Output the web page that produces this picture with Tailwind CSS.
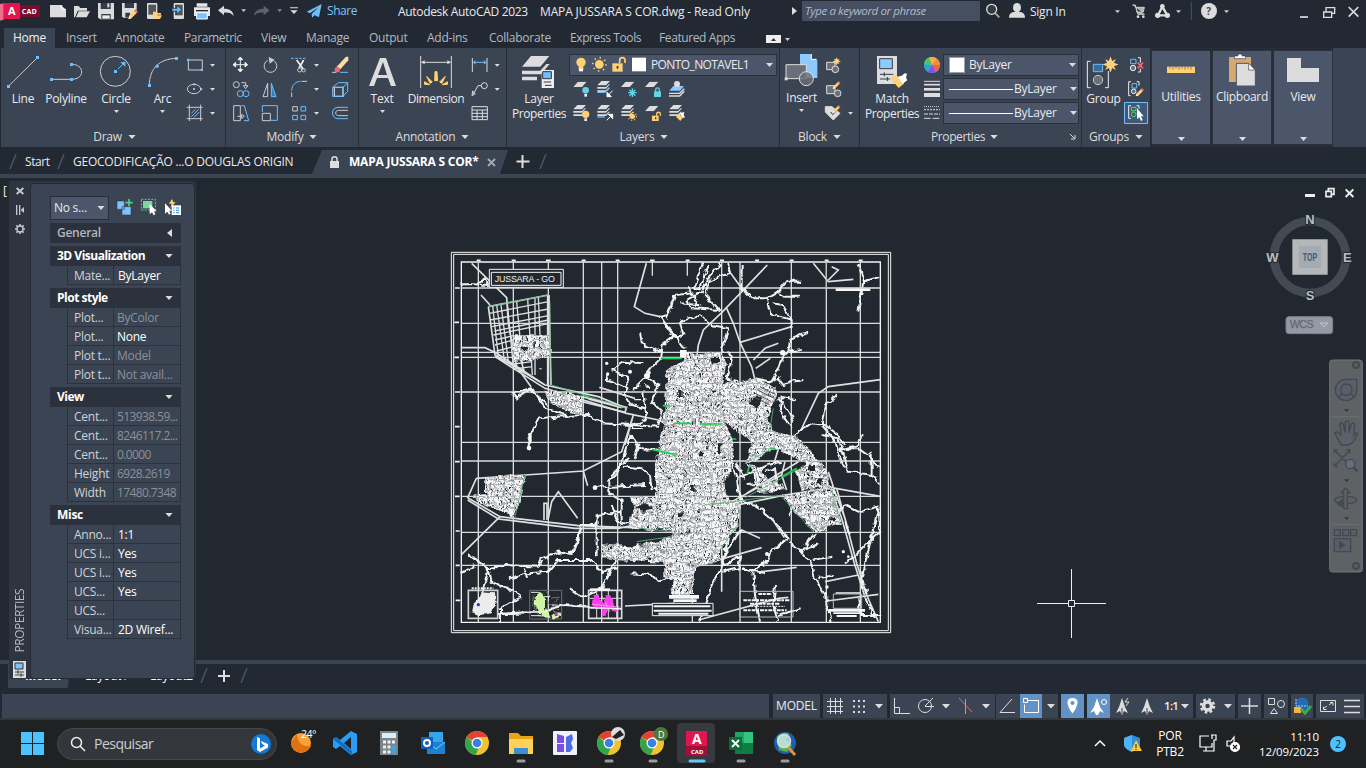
<!DOCTYPE html>
<html lang="en">
<head>
<meta charset="utf-8">
<title>Autodesk AutoCAD 2023</title>
<script src="https://cdn.jsdelivr.net/npm/@tailwindcss/browser@4"></script>
</head>
<body class="w-[1366px] h-[768px] overflow-hidden bg-[#222933] text-[#e8eaed] font-['Open_Sans','Noto_Sans',sans-serif] text-[12px] leading-none tracking-[-0.25px] whitespace-nowrap">
<svg class="hidden">
  <symbol id="caret" viewBox="0 0 9 5"><path d="M0 0h9L4.500 5z" fill="#dcdcdc"/></symbol>
  <symbol id="star" viewBox="-12 -12 24 24"><path d="M0-12 2.500-5 8-8 5-2.500 12 0 5 2.500 8 8 2.500 5 0 12-2.500 5-8 8-5 2.500-12 0-5-2.500-8-8-2.500-5z" fill="#ffd174"/></symbol>
  <symbol id="sheet" viewBox="0 0 40 16"><path d="M14 0h26L26 16H0z" fill="#dcdcdc"/></symbol>
  <symbol id="stack" viewBox="0 0 42 40"><path d="M14 0h26L28 13H2zM2 18h26l8-8h4L28 23H2zM2 28h26l8-8h4L28 33H2z" fill="#dcdcdc"/></symbol>
  <symbol id="pencil" viewBox="0 0 26 26"><path d="M1 25 3 17 18 2l6 6L9 23z" fill="#ffd174"/><path d="m16 4 4-4 6 6-4 4z" fill="#f4646c"/><path d="m1 25 2-8 6 6z" fill="#eee"/></symbol>
  <symbol id="scale" viewBox="0 0 16 18"><path d="M8 1 11 10 14 16 10 14 8.500 17.500h-1L6 14 2 16 5 10z" fill="#dcdcdc"/><path d="M8 11v6" stroke="#3b4453"/></symbol>
</svg>

<div class="flex flex-col w-full h-full">
<!-- title bar -->
<header class="flex items-start h-[28px] bg-[#222933] [&>*]:shrink-0">
  <svg width="48" height="24" viewBox="0 0 144 72"><path d="M0 12 16 9v48L0 62z" fill="#ee6f8c"/><path d="M10 9h50v48H10z" fill="#e3154f"/><path d="M60 15h60v36H60z" fill="#7a0c2f"/><text x="24" y="44" font-size="33" font-weight="700" fill="#fff" letter-spacing="0">A</text><text x="65" y="41" font-size="21" font-weight="700" fill="#fff" letter-spacing="1">CAD</text></svg>
  <svg width="24" height="24" viewBox="144 0 72 72"><path d="M150 15h33l15 15v22h-48z" fill="#dcdcdc"/><path d="M185 15v13h13" fill="none" stroke="#fff" stroke-width="3"/></svg>
  <svg width="24" height="24" viewBox="216 0 72 72"><path d="M222 18h14l5 6h20v8h-28l-8 20h-3z" fill="#dcdcdc"/><path d="M236 34h34l-10 18h-32z" fill="#dcdcdc"/></svg>
  <svg width="24" height="24" viewBox="288 0 72 72"><path d="M294 9h48v49h-42l-6-6z" fill="#dcdcdc"/><path d="M302 9h30v18h-30zM304 42h28v16h-28z" fill="#333b48"/><path d="M307 46h22v10h-22z" fill="#eee"/><path d="M322 10h6v12h-6z" fill="#ddd"/></svg>
  <svg width="24" height="24" viewBox="360 0 72 72"><path d="M366 9h44v20l-28 24h-12l-4-4z" fill="#dcdcdc"/><path d="M374 9h28v15h-28zM376 38h14v14h-14z" fill="#333b48"/><use href="#pencil" x="384" y="28" width="30" height="30"/></svg>
  <svg width="24" height="24" viewBox="432 0 72 72"><rect x="441" y="9" width="31" height="48" rx="3" fill="#dcdcdc"/><path d="M445 14h23v30h-23z" fill="#555"/><path d="M459 35h10l3 4h11v5h-14l-7 13h-3zM469 46h17l-6 11h-17z" fill="#ffd174"/></svg>
  <svg width="22" height="24" viewBox="504 0 66 72"><rect x="521" y="9" width="31" height="48" rx="3" fill="#dcdcdc"/><path d="M525 14h23v32h-23z" fill="#555"/><path d="M516 25h15v-10l14 14-14 14v-9h-15z" fill="#62b8f5" stroke="#222933" stroke-width="2"/></svg>
  <svg width="24" height="24" viewBox="570 0 72 72"><path d="M590 10h32v10h-32zM582 22h48v26h-48z" fill="#e6e6e6"/><path d="M588 30h36v4h-36z" fill="#222933"/><path d="M590 38h32v19h-32z" fill="#7cc4ff" stroke="#fff" stroke-width="3"/></svg>
  <svg width="22" height="24" viewBox="642 0 66 72"><path d="M654 31l18-14v9c18 0 28 8 29 22-6-8-14-11-29-10v8z" fill="#dcdcdc"/></svg>
  <svg width="14" height="24" viewBox="708 0 42 72"><path d="M724 28h14l-7 8z" fill="#ccc"/></svg>
  <svg width="23" height="24" viewBox="750 0 69 72"><path d="M809 31l-18-14v9c-18 0-28 8-29 22 6-8 14-11 29-10v8z" fill="#5b626c"/></svg>
  <svg width="11" height="24" viewBox="819 0 33 72"><path d="M832 28h14l-7 8z" fill="#8a8f96"/></svg>
  <svg width="18" height="24" viewBox="852 0 54 72"><path d="M870 22h24v3h-24zM871 31h22l-11 11z" fill="#dcdcdc"/></svg>
  <svg width="24" height="24" viewBox="906 0 72 72"><path d="M920 35 965 12 957 52 944 46 936 53 935 42 955 22 930 40z" fill="#6cbdf5"/></svg>
  <span class="w-[72px] pl-px pt-[5px] tracking-[-0.45px] text-[#7fc4f2]">Share</span>
  <span class="w-[142px] pt-[6px] tracking-[-0.32px]">Autodesk AutoCAD 2023</span>
  <span class="w-[248px] pt-[6px] tracking-[-0.14px]">MAPA JUSSARA S COR.dwg - Read Only</span>
  <svg width="14" height="24" viewBox="0 0 14 24"><path d="M4 7v8l5-4z" fill="#ddd"/></svg>
  <div class="w-[178px] h-[20px] mt-px bg-[#454f61] pl-[3px] pt-[4px] italic text-[#b4bac4] text-[11.5px] tracking-[-0.4px]">Type a keyword or phrase</div>
  <svg width="26" height="24" viewBox="630 0 78 72"><path d="m674 38 14 14" stroke="#c79a6b" stroke-width="6"/><circle cx="665" cy="28" r="15" fill="#333b48" stroke="#dcdcdc" stroke-width="4"/></svg>
  <svg width="23" height="24" viewBox="708 0 69 72"><ellipse cx="741" cy="23" rx="12" ry="14" fill="#ddd"/><path d="M717 53c0-12 8-17 17-17h14c9 0 17 5 17 17z" fill="#ddd"/></svg>
  <span class="w-[81px] pt-[6px] pl-[1px]">Sign In</span>
  <svg width="22" height="24" viewBox="150 0 66 72"><path d="M165 31h15l-7.500 8z" fill="#ccc"/></svg>
  <svg width="22" height="24" viewBox="216 0 66 72"><path d="M217 15h9l8 28h20M226 22h27l-3 14h-21" fill="#aeb0b3" stroke="#ccc" stroke-width="3"/><circle cx="234" cy="50" r="4" fill="#ddd"/><circle cx="250" cy="50" r="4" fill="#ddd"/></svg>
  <svg width="34" height="24" viewBox="282 0 102 72"><path d="m307 20-13 26h28z" fill="none" stroke="#ddd" stroke-width="7"/><circle cx="307" cy="19" r="7" fill="#ddd"/><circle cx="293" cy="46" r="8" fill="#ddd"/><circle cx="322" cy="46" r="8" fill="#ddd"/><path d="M348 31h15l-7.500 8z" fill="#ccc"/></svg>
  <svg width="52" height="24" viewBox="384 0 156 72"><path d="M394 6v54" stroke="#4a5362" stroke-width="3"/><circle cx="447" cy="33" r="24" fill="#dcdcdc"/><text x="439" y="44" font-size="30" font-weight="700" fill="#444b58">?</text><path d="M492 31h15l-7.500 8z" fill="#ccc"/></svg>
  <svg width="126" height="24" viewBox="540 0 378 72" fill="none" stroke="#ddd"><path d="M720 51h24" stroke-width="5"/><path d="M791 36h24v16h-24zM798 34v-11h26v17h-8" stroke-width="4"/><path d="m866 21 29 29M895 21l-29 29" stroke-width="5"/></svg>
</header>

<!-- ribbon tabs -->
<nav class="flex h-[20px] items-stretch pl-[4px] text-[#b4b9c1]">
  <span class="w-[51px] h-[20px] bg-[#3b4453] text-[#f0f0f0] pl-[9px] pt-[4px] mr-[11px]">Home</span>
  <span class="w-[49px] pt-[4px]">Insert</span><span class="w-[69px] pt-[4px]">Annotate</span><span class="w-[77px] pt-[4px] tracking-[-0.35px]">Parametric</span><span class="w-[45px] pt-[4px]">View</span><span class="w-[63px] pt-[4px]">Manage</span><span class="w-[58px] pt-[4px]">Output</span><span class="w-[62px] pt-[4px]">Add-ins</span><span class="w-[81px] pt-[4px]">Collaborate</span><span class="w-[89px] pt-[4px] tracking-[-0.4px]">Express Tools</span><span class="w-[107px] pt-[4px] tracking-[-0.4px]">Featured Apps</span>
  <svg width="30" height="20" viewBox="0 0 30 20"><path d="M0 7h15v8H0z" fill="#eee"/><path d="m5 13 2.500-3 2.500 3z" fill="#333"/><path d="M19 10h5l-2.500 3z" fill="#ccc"/></svg>
</nav>

<!-- ribbon -->
<section class="flex h-[99px] ml-px bg-[#3b4453]">
  <!-- Draw -->
  <div class="w-[224px] flex flex-col">
    <div class="flex h-[79px] pt-[2px]">
      <div class="w-[41px] flex flex-col items-center"><svg width="41" height="40" viewBox="3 150 123 120"><path d="M25 259 112 173" stroke="#ccc" stroke-width="3"/><path d="M21 255h9v9h-9zM108 168h9v9h-9z" fill="#6cc0ff"/></svg><span class="pt-[3px] pl-[3px]">Line</span></div>
      <div class="w-[48px] flex flex-col items-center"><svg width="48" height="40" viewBox="126 150 144 120"><path d="M154 238h60c22 0 31-12 31-22 0-13-11-23-31-23" fill="none" stroke="#ccc" stroke-width="3"/><path d="M150 234h9v9h-9zM210 234h9v9h-9zM210 189h9v9h-9z" fill="#6cc0ff"/></svg><span class="pt-[3px]">Polyline</span></div>
      <div class="w-[52px] flex flex-col items-center"><svg width="52" height="40" viewBox="270 150 156 120"><circle cx="346" cy="214" r="45" fill="none" stroke="#ccc" stroke-width="3"/><path d="M342 210h9v9h-9zM376 185v15l-15-13z" fill="#6cc0ff"/><path d="m354 207 14-14" stroke="#6cc0ff" stroke-width="3"/></svg><span class="pt-[3px]">Circle</span><svg class="w-[5px] h-[3px] mt-[5px]"><use href="#caret"/></svg></div>
      <div class="w-[41px] flex flex-col items-center"><svg width="41" height="40" viewBox="426 150 123 120"><path d="M448 256c0-50 30-80 82-81" fill="none" stroke="#ccc" stroke-width="3"/><path d="M444 252h9v9h-9zM525 171h9v9h-9zM467 194h9v9h-9z" fill="#6cc0ff"/></svg><span class="pt-[3px]">Arc</span><svg class="w-[5px] h-[3px] mt-[5px]"><use href="#caret"/></svg></div>
      <svg width="42" height="72" class="mt-[3px]" viewBox="549 159 126 216" fill="none" stroke="#ccc" stroke-width="3"><path d="M565 180h42v30h-42z"/><path d="M561 176h7v7h-7zM602 206h7v7h-7zM580 250h6v6h-6zM600 264h7v6h-7zM579 264h6v6h-6z" fill="#6cc0ff" stroke="none"/><ellipse cx="582" cy="267" rx="20" ry="14"/><path d="M560 322h48M560 356h48M568 314v49M602 314v49"/><path d="m574 340 12-12M574 350l22-22M582 352l16-16" stroke="#6cc0ff"/><path d="M630 192h15l-7.500 8zM630 264h15l-7.500 8zM630 336h15l-7.500 8z" fill="#ddd" stroke="none"/></svg>
    </div>
    <div class="flex items-center justify-center gap-[6px] h-[20px] pl-[3px] text-[#ddd]">Draw <svg class="w-[8px] h-[4px]"><use href="#caret"/></svg></div>
  </div>
  <!-- Modify -->
  <div class="w-[133px] flex flex-col border-l border-[#262d38]">
    <svg width="132" height="72" class="mt-[5px] mb-[2px]" viewBox="678 159 396 216" fill="none" stroke="#ccc" stroke-width="3">
      <path d="M700 194h42M721 172v43M714 179l7-8 7 8zM714 208l7 8 7-8zM707 187l-8 7 8 7zM735 187l8 7-8 7z" stroke="#eee" fill="#eee"/>
      <path d="M803 181a19 19 0 1 0 20 2"/><path d="M806 171l18 8-15 12z" fill="#ccc" stroke="none"/>
      <path d="M873 175h46" stroke="#6cc0ff" stroke-dasharray="8 4"/><path d="m890 180 20 28M911 180l-14 24" stroke="#eee" stroke-width="5"/><circle cx="899" cy="210" r="6"/><circle cx="911" cy="211" r="5"/>
      <path d="m1010 200 28-30h7v11l-24 27z" fill="#ffdca0" stroke="none"/><circle cx="1012" cy="209" r="8" fill="#f4646c" stroke="none"/><path d="M996 217h13"/><path d="M1020 217h24" stroke="#6cc0ff"/>
      <circle cx="709" cy="254" r="9"/><path d="M724 248h13v10M730 257h14l-7 9z"/><g stroke="#6cc0ff"><circle cx="721" cy="281" r="9"/><circle cx="738" cy="281" r="9"/></g>
      <path d="M803 250v40h-14z"/><path d="M814 250v40h14z" fill="#2f82bd" stroke="#6cc0ff"/>
      <path d="M875 291v-14M904 244h17"/><path d="M875 272c0-16 11-27 26-28" stroke="#6cc0ff"/>
      <path d="M1003 262h26v27h-26z" stroke-width="4"/><path d="M998 262v27h31l14-15v-26h-28zM998 262h31v27M1029 262l14-14" stroke="#6cc0ff"/>
      <path d="M701 317h20v45h-20zM712 349h14M725 343l8 6-8 6z"/><path d="M724 317h9l13 45h-14" stroke="#6cc0ff"/>
      <path d="M787 336v-19h45v44h-19" stroke="#6cc0ff"/><path d="M787 340h24v22h-24z"/>
      <path d="M878 320h14v13h-14z"/><path d="M903 320h14v13h-14zM878 346h14v13h-14zM903 346h14v13h-14z" stroke="#6cc0ff"/>
      <path d="M1044 322h-30c-22 0-22 34 0 34h30" stroke="#6cc0ff"/><path d="M1044 331h-28c-12 0-12 16 0 16h28"/>
      <path d="M942 192h15l-7.500 8zM942 264h15l-7.500 8zM942 336h15l-7.500 8z" fill="#ddd" stroke="none"/>
    </svg>
    <div class="flex items-center justify-center gap-[6px] h-[20px] text-[#ddd]">Modify <svg class="w-[8px] h-[4px]"><use href="#caret"/></svg></div>
  </div>
  <!-- Annotation -->
  <div class="w-[148px] flex flex-col border-l border-[#262d38]">
    <div class="flex h-[79px] pt-[2px]">
      <div class="w-[46px] flex flex-col items-center"><svg width="46" height="40" viewBox="0 0 46 40"><path d="M21 8h6l10 28h-5l-3-8H18l-3 8h-5zm3 4-5 13h9z" fill="#ddd" fill-rule="evenodd"/></svg><span class="pt-[3px]">Text</span><svg class="w-[5px] h-[3px] mt-[5px]"><use href="#caret"/></svg></div>
      <div class="w-[62px] flex flex-col items-center"><svg width="62" height="40" viewBox="132 150 186 120"><path d="M179 168v96M271 168v96M182 187h86" stroke="#ddd" stroke-width="3"/><path d="m180 187 11-6v12zM270 187l-11-6v12z" fill="#ddd"/><path d="m190 253 16 1-15-9zM197 229l17 17-7 4zM222 215h6l2 27h-9zM253 229l-17 17 7 4zM260 253l-16 1 15-9z" fill="#ffd174" stroke="#ffd174" stroke-width="3"/></svg><span class="pt-[3px] tracking-[-0.4px]">Dimension</span></div>
      <svg width="36" height="72" class="mt-[3px]" viewBox="322 159 108 216" fill="none" stroke="#ddd" stroke-width="3"><path d="M338 174v42M382 174v42"/><path d="M341 187h38M348 182l-7 5 7 5M372 182l7 5-7 5" stroke="#6cc0ff"/><circle cx="374" cy="257" r="9"/><path d="M365 257h-10l-14 25M337 287l2-14 8 8z"/><path d="M337 320h46v39h-46zM337 330h46M337 340h46M337 350h46M352 330v29M368 330v29"/><path d="M405 192h15l-7.500 8zM405 264h15l-7.500 8z" fill="#ddd" stroke="none"/></svg>
    </div>
    <div class="flex items-center justify-center gap-[6px] h-[20px] text-[#ddd]">Annotation <svg class="w-[8px] h-[4px]"><use href="#caret"/></svg></div>
  </div>
  <!-- Layers -->
  <div class="w-[273px] flex flex-col border-l border-[#262d38]">
    <div class="flex h-[79px] pt-[2px]">
      <div class="w-[62px] flex flex-col items-center"><svg width="62" height="40" viewBox="441 150 186 120"><path d="M513 168h55l-27 32h-55zM486 212h55l18-20h10l-26 31h-57zM486 230h45v11h-45z" fill="#ddd"/><path d="M545 210h37v54h-37z" fill="#eee"/><path d="M548 215h26v21h-26z" fill="#6cc0ff" stroke="#333" stroke-width="3"/><path d="M551 246h22M555 256h20" stroke="#333" stroke-width="3"/></svg><span class="pt-[3px] pl-[2px]">Layer</span><span class="pt-[3px] pl-[2px] tracking-[-0.4px]">Properties</span></div>
      <div class="flex flex-col">
        <div class="mt-[4px] w-[208px] h-[22px] bg-[#4b566a] border border-[#2a313d] flex items-center">
          <svg width="80" height="20" viewBox="630 166 240 60"><circle cx="663" cy="188" r="14" fill="#ffd174"/><path d="M656 200h14v10h-14z" fill="#ffd174"/><path d="M657 207h12v8h-12z" fill="#fff"/><circle cx="718" cy="194" r="13" fill="#ffd174"/><circle cx="718" cy="194" r="20" fill="none" stroke="#ffd174" stroke-width="5" stroke-dasharray="4 11.700"/><path d="M757 191h31v25h-31z" fill="#ffd174"/><path d="M779 191v-9c0-11 16-11 16 0v8" fill="none" stroke="#ffd174" stroke-width="5"/><path d="M770 199h5v8h-5z" fill="#333"/><path d="M816 174h42v41h-42z" fill="#fff"/></svg>
          <span class="pl-[1px] w-[116px] tracking-[-0.6px]">PONTO_NOTAVEL1</span><svg class="w-[7px] h-[4px]"><use href="#caret"/></svg>
        </div>
        <svg width="130" height="48" viewBox="627 228 390 144"><use href="#sheet" x="640" y="245" width="40" height="16"/><circle cx="677" cy="271" r="10" fill="#63d3e6"/><path d="M673 282h8v8h-8z" fill="#eee"/>
          <use href="#stack" x="710" y="243" width="42" height="40"/><path d="M712 277h22l14-14" stroke="#6cc0ff" stroke-width="4" fill="none"/><path d="m758 272-14 14M741 277v13h13z" stroke="#fff" stroke-width="3" fill="#fff"/>
          <use href="#sheet" x="783" y="245" width="40" height="16"/><path d="M817 265v26M804 278h26M808 269l18 18M826 269l-18 18" stroke="#63d3e6" stroke-width="4"/>
          <use href="#sheet" x="855" y="245" width="40" height="16"/><path d="M882 274h21v17h-21z" fill="#63d3e6"/><path d="M887 275v-6c0-7 11-7 11 0v6" fill="none" stroke="#63d3e6" stroke-width="4"/>
          <path d="M940 258h32l-12 14h-32z" fill="#8ccaff"/><circle cx="951" cy="252" r="9" fill="#ddd"/><path d="M927 280h32l14-14M927 288h32l14-14" fill="none" stroke="#ddd" stroke-width="4"/>
          <use href="#stack" x="638" y="315" width="42" height="40"/><circle cx="677" cy="343" r="11" fill="#ffd174"/><path d="M673 355h8v8h-8z" fill="#eee"/>
          <use href="#stack" x="710" y="315" width="42" height="40"/><path d="M712 351h22" stroke="#6cc0ff" stroke-width="4"/><path d="m740 361 14-14M745 343h13v13z" stroke="#fff" stroke-width="3" fill="#fff"/>
          <use href="#stack" x="782" y="315" width="42" height="40"/><circle cx="817" cy="349" r="8" fill="#ffd174"/><circle cx="817" cy="349" r="12" fill="none" stroke="#ffd174" stroke-width="4" stroke-dasharray="3 6.400"/>
          <use href="#sheet" x="855" y="318" width="40" height="16"/><path d="M876 347h20v16h-20z" fill="#ffd174"/><path d="M890 347v-5c0-7 11-7 11 0v5" fill="none" stroke="#ffd174" stroke-width="4"/><path d="M885 352h4v6h-4z" fill="#333"/>
          <use href="#stack" x="926" y="315" width="42" height="40"/><path d="m948 350 10-9 10 12-7 10z" fill="#ffd174"/><path d="m959 340 14-4-2 9 4 7-7 2z" fill="#fff"/></svg>
      </div>
    </div>
    <div class="flex items-center justify-center gap-[6px] h-[20px] pl-[2px] text-[#ddd]">Layers <svg class="w-[8px] h-[4px]"><use href="#caret"/></svg></div>
  </div>
  <!-- Block -->
  <div class="w-[80px] flex flex-col border-l border-[#262d38]">
    <div class="flex h-[79px] pt-[2px]">
      <div class="w-[43px] flex flex-col items-center"><svg width="43" height="39" viewBox="30 150 129 117"><path d="M90 162h32l20 20v52H90z" fill="#8ccaff"/><path d="M124 162v16h16" fill="#3b4453" stroke="#fff" stroke-width="3"/><path d="M48 194h61v42H48z" fill="#6a7078" stroke="#ddd" stroke-width="3"/><circle cx="109" cy="236" r="21" fill="#6a7078" fill-opacity=".8" stroke="#ddd" stroke-width="3"/><path d="M44 232h9v9h-9z" fill="#ddd"/></svg><span class="pt-[3px]">Insert</span><svg class="w-[5px] h-[3px] mt-[5px]"><use href="#caret"/></svg></div>
      <svg width="36" height="72" class="mt-[3px]" viewBox="159 159 108 216" fill="#6a7078" stroke="#ddd" stroke-width="3"><path d="M170 187h25v22h-25z"/><circle cx="196" cy="208" r="10"/><use href="#star" x="187" y="171" width="26" height="26" stroke="none"/><path d="M170 257h25v24h-25z"/><circle cx="203" cy="280" r="10"/><use href="#pencil" x="187" y="243" width="25" height="25" stroke="none"/><path d="M166 320h20l24 20-20 20-24-24z" fill="#ddd"/><path d="m182 336 6 8 14-14" stroke="#333" fill="none"/><use href="#pencil" x="187" y="315" width="25" height="25" stroke="none"/><path d="M234 336h15l-7.500 8z" fill="#ddd" stroke="none"/></svg>
    </div>
    <div class="flex items-center justify-center gap-[6px] h-[20px] text-[#ddd]">Block <svg class="w-[8px] h-[4px]"><use href="#caret"/></svg></div>
  </div>
  <!-- Properties -->
  <div class="w-[222px] flex flex-col border-l border-[#262d38]">
    <div class="flex h-[79px] pt-[2px]">
      <div class="w-[62px] flex flex-col items-center"><svg width="62" height="40" viewBox="270 150 186 120"><path d="M321 168h60v84h-60z" fill="#ddd"/><path d="M329 176h38v30h-38z" fill="#8ccaff" stroke="#333b48" stroke-width="3"/><path d="M330 223h40M330 237h30M343 217v12M352 231v12" stroke="#333b48" stroke-width="3"/><path d="m361 235 18-10 23 26-16 13z" fill="#ffd174"/><path d="m383 230 12-3 9-7 7 1-3 12 4 8-14 10z" fill="#fff"/></svg><span class="pt-[3px] pl-[2px]">Match</span><span class="pt-[3px] pl-[2px] tracking-[-0.4px]">Properties</span></div>
      <svg width="20" height="72" class="mt-[3px]" viewBox="456 159 60 216" fill="none"><g stroke-width="24"><circle cx="486" cy="195" r="12" stroke="#49b7d8"/><circle cx="486" cy="195" r="12" stroke="#f0604d" stroke-dasharray="12.600 100"/><circle cx="486" cy="195" r="12" stroke="#8a4df0" stroke-dasharray="0 12.600 12.600 100"/><circle cx="486" cy="195" r="12" stroke="#25a6d0" stroke-dasharray="0 25.200 12.600 100"/><circle cx="486" cy="195" r="12" stroke="#4cc36b" stroke-dasharray="0 37.800 12.600 100"/><circle cx="486" cy="195" r="12" stroke="#f7b23b" stroke-dasharray="0 50.400 12.600 100"/><circle cx="486" cy="195" r="12" stroke="#f58a3d" stroke-dasharray="0 63 13 100"/></g><path d="M462 244h48" stroke="#ddd" stroke-width="3"/><path d="M462 254h48" stroke="#ddd" stroke-width="5"/><path d="M462 268h48" stroke="#ddd" stroke-width="8"/><path d="M462 285h48" stroke="#ddd" stroke-width="12"/><g stroke="#ddd" stroke-width="3"><path d="M462 320h48" stroke-dasharray="3 3"/><path d="M462 329h48" stroke-dasharray="6 3"/><path d="M462 342h48" stroke-dasharray="12 3"/><path d="M462 355h48" stroke-dasharray="20 6"/></g></svg>
      <div class="flex flex-col gap-[2px] mt-[4px] ml-px">
        <div class="w-[136px] h-[22px] bg-[#4b566a] border border-[#2a313d] flex items-center"><span class="w-[16px] h-[16px] bg-white border border-gray-400 ml-[5px] mr-[4px]"></span><span class="w-[100px]">ByLayer</span><svg class="w-[7px] h-[4px] mr-[2px] shrink-0"><use href="#caret"/></svg></div>
        <div class="w-[136px] h-[22px] bg-[#4b566a] border border-[#2a313d] flex items-center"><span class="w-[64px] h-px bg-white ml-[5px] mr-[1px]"></span><span class="w-[56px]">ByLayer</span><svg class="w-[7px] h-[4px] shrink-0"><use href="#caret"/></svg></div>
        <div class="w-[136px] h-[22px] bg-[#4b566a] border border-[#2a313d] flex items-center"><span class="w-[64px] h-px bg-white ml-[5px] mr-[1px]"></span><span class="w-[56px]">ByLayer</span><svg class="w-[7px] h-[4px] shrink-0"><use href="#caret"/></svg></div>
      </div>
    </div>
    <div class="flex items-center h-[20px] text-[#ddd] pl-[71px]"><span class="w-[59px] tracking-[-0.4px]">Properties</span><svg class="w-[8px] h-[4px] mr-[72px]"><use href="#caret"/></svg><svg width="6" height="6" viewBox="0 0 6 6"><path d="M0 0l4 4M5 1v4H1" stroke="#ddd" fill="none"/></svg></div>
  </div>
  <!-- Groups -->
  <div class="w-[69px] flex flex-col border-l border-[#262d38]">
    <div class="flex h-[79px] pt-[2px]">
      <div class="w-[43px] flex flex-col items-center"><svg width="43" height="40" viewBox="66 150 129 120" fill="none" stroke="#eee" stroke-width="3"><path d="M92 184H82v79h10M135 263h10v-50"/><path d="M100 193h28v22h-28z" fill="#3f6b93" stroke="#6cc0ff"/><circle cx="114" cy="240" r="14" fill="#6a7078" stroke="#ccc"/><use href="#star" x="127" y="169" width="49" height="49" stroke="none"/></svg><span class="pt-[3px]">Group</span></div>
      <div class="flex flex-col mt-[3px] -ml-px"><svg width="24" height="48" viewBox="192 159 72 144" fill="none" stroke="#eee" stroke-width="3"><path d="M212 178h16v13h-16zM216 251h14v13h-14z" stroke="#6cc0ff"/><circle cx="219" cy="204" r="8" fill="#6a7078"/><circle cx="221" cy="274" r="7" fill="#6a7078"/><path d="M234 173h7v15M234 216h7v-10M213 245h-7v42h6M230 245h7v12"/><path d="m233 188 16 17M249 188l-16 17" stroke="#f4646c" stroke-width="5"/><use href="#pencil" x="226" y="264" width="26" height="26" stroke="none"/></svg>
      <svg class="bg-[#3f5a78] mt-px" width="24" height="22" viewBox="192 306 72 66" fill="none" stroke="#eee" stroke-width="3"><path d="M193.500 307.500h69v63h-69z" stroke="#6cc0ff"/><path d="M213 317h-7v38h7M230 317h7v9"/><path d="M214 322h14v10h-14z" stroke="#5fd07a"/><circle cx="221" cy="343" r="7" stroke="#5fd07a"/><path d="M231 325v33l7-6 5 11 5-3-5-11h8z" fill="#fff" stroke="none"/></svg></div>
    </div>
    <div class="flex items-center justify-center gap-[6px] h-[20px] text-[#ddd]">Groups <svg class="w-[8px] h-[4px]"><use href="#caret"/></svg></div>
  </div>
  <div class="flex gap-px pt-[2px] pb-[2px] pl-[1px] bg-[#262d38] w-[183px]">
    <div class="w-[60px] bg-[#4b566a] border border-[#2a313d] flex flex-col items-center"><svg width="58" height="38" viewBox="276 153 174 114"><path d="M321 200h84v19h-84z" fill="#ffd174"/><path d="M330 200v6M339 200v9M348 200v6M357 200v9M366 200v6M375 200v9M384 200v6M393 200v9" stroke="#5a5040" stroke-width="2"/></svg><span class="pt-[2px]">Utilities</span><svg class="w-[7px] h-[4px] mt-[34px]"><use href="#caret"/></svg></div>
    <div class="w-[60px] bg-[#4b566a] border border-[#2a313d] flex flex-col items-center"><svg width="58" height="38" viewBox="459 153 174 114"><path d="M507 171h66v75h-66z" fill="#d8a872"/><path d="M523 176v-8h10c2-8 12-8 14 0h10v8z" fill="#fff" stroke="#333b48" stroke-width="2"/><path d="M529 190h36l21 21v47h-57z" fill="#ddd" stroke="#4b566a" stroke-width="3"/><path d="M566 190v20h20z" fill="#fff" stroke="#333b48" stroke-width="2"/></svg><span class="pt-[2px]">Clipboard</span><svg class="w-[7px] h-[4px] mt-[34px]"><use href="#caret"/></svg></div>
    <div class="w-[60px] bg-[#4b566a] border border-[#2a313d] flex flex-col items-center"><svg width="58" height="38" viewBox="642 153 174 114"><path d="M681 174h42v30h54v42h-96z" fill="#dcdcdc"/></svg><span class="pt-[2px]">View</span><svg class="w-[7px] h-[4px] mt-[34px]"><use href="#caret"/></svg></div>
  </div>
</section>

<!-- file tabs -->
<div class="flex items-center h-[27px] pt-[2px] bg-[#222933] [&>*]:shrink-0">
  <svg width="25" height="23" viewBox="0 0 25 23"><path d="M10 19 16 4" stroke="#4b5462" stroke-width="1.500"/></svg><span class="w-[25px] tracking-[-0.4px]">Start</span>
  <svg width="23" height="23" viewBox="0 0 23 23"><path d="m8 19 6-15" stroke="#4b5462" stroke-width="1.500"/></svg><span class="w-[239px] tracking-[-0.23px]">GEOCODIFICAÇÃO ...O DOUGLAS ORIGIN</span>
  <div class="w-[196px] h-[24px] mt-[1px] bg-[#3b4453] [clip-path:polygon(10px_0,196px_0,188px_100%,0_100%)] flex items-center pl-[18px] [&>*]:shrink-0"><svg width="10" height="12" viewBox="0 0 10 12"><path d="M0 5h9v7H0z" fill="#ddd"/><path d="M2 6V3c0-3 5-3 5 0v3" fill="none" stroke="#ddd" stroke-width="1.500"/></svg><span class="font-bold text-white w-[147px] pl-[9px] tracking-[-0.22px]">MAPA JUSSARA S COR*</span><svg width="9" height="9" viewBox="0 0 9 9"><path d="m1 1 7 7M8 1 1 8" stroke="#a5abb5" stroke-width="1.800"/></svg></div>
  <svg width="50" height="23" viewBox="508 150 50 23"><path d="M516.500 161.500h13M522.500 155v13" stroke="#ddd" stroke-width="2"/><path d="m540 169 6-15" stroke="#4b5462" stroke-width="1.500"/></svg>
</div>
<div class="h-[4px] bg-[#3b4453]"></div>

<!-- drawing area -->
<main class="relative h-[482px] bg-[#212830]">
  <span class="absolute left-[3px] top-[7px]">[</span>
  <svg class="absolute left-[445px] top-[67px]" width="455" height="393" viewBox="0 0 1365 1179" fill="none" stroke="#f4f4f4" stroke-width="3">
    <defs>
      <filter id="wiggle" x="-5%" y="-5%" width="110%" height="110%" color-interpolation-filters="sRGB"><feTurbulence type="fractalNoise" baseFrequency=".05" numOctaves="2" seed="4"/><feDisplacementMap in="SourceGraphic" scale="18" xChannelSelector="R" yChannelSelector="G"/></filter>
      <filter id="rough" x="-5%" y="-5%" width="110%" height="110%" color-interpolation-filters="sRGB"><feTurbulence type="fractalNoise" baseFrequency=".03" numOctaves="3" seed="9"/><feDisplacementMap in="SourceGraphic" scale="26" xChannelSelector="R" yChannelSelector="G"/></filter>
      <clipPath id="town"><path d="M668 375 725 330 765 325 800 320 840 335 835 415 870 410 935 400 995 432 985 480 970 510 975 555 1055 580 1105 620 1145 680 1165 725 1070 738 1055 680 1080 655 1000 612 950 630 905 660 920 590 880 560 835 530 860 580 868 620 855 680 840 715 850 765 890 768 880 840 825 910 825 945 750 965 750 1050 675 1050 680 1000 655 1000 655 950 470 940 470 895 560 905 680 880 680 860 560 845 565 785 555 755 630 760 630 640 645 600 655 530zM1008 752 1165 730 1188 835 1110 864zM935 745 1018 735 1005 710 940 720zM908 660 948 668 970 705 935 722zM205 270H315V335L205 348zM298 435 415 450 415 512 320 482zM120 695 243 690 210 815 75 760 120 750z"/></clipPath>
    </defs>
    <path d="M19 22H1337V1163H19zM26 28H1330V1157H26z"/><path d="M49 51H1306V1132H49z" stroke-width="4"/>
    <g stroke="#dadbdc" stroke-width="4"><path d="M100 51V1132M205 51V1132M310 51V1132M415 51V1132M470 51V1132M518 51V1132M885 51V1132M830 51V380M1039 51V1132M1144 51V1132M1246 51V1132M742 1050V1132M49 129H1306M49 235H1306M49 322H1306M49 337H1306M49 441H1306M49 592H1306M49 648H1306M49 754H1306M49 862H1306M49 961H1306M622 48V92M727 48V92"/></g>
    <path d="M95 46h12M200 46h12M303 46h14M410 46h12M512 46h12M615 46h14M722 46h12M825 46h12M930 46h12M1034 46h12M1139 46h12M1241 46h12M30 129h14M28 232h14M28 337h14M30 441h16M30 545h14M30 650h14M30 754h14M32 858h12M32 961h12M32 1066h14" stroke-width="5"/>
    <!-- straight roads -->
    <g stroke="#dfe0e1" stroke-width="5">
      <path d="M80 55 185 158 190 235 215 365 258 425M49 308H120L155 325 300 420 460 455 545 490M312 150 318 420M308 150V420M150 335 300 430 545 505 640 525 660 535M604 55 568 185 600 205 645 215M463 427 570 460M130 185 310 150M130 185 150 330 300 420M108 150 135 180" />
      <path d="M143 183 160 335M155 180 178 345M168 180 190 350M187 175 205 365M215 170 235 385M248 162 262 390M280 156 285 270M133 205 310 170M135 225 310 192M140 245 310 212M145 270 310 236M150 300 205 285M155 318 205 305M148 258 310 225M150 285 205 272M205 357 262 350M205 372 262 365M225 340 240 385M270 160V390" stroke-width="4"/>
      <path d="M410 455 545 487 540 502 410 470zM430 462l100 26"/>
      <path d="M94 700 240 690 415 678 530 620 565 510 540 600M94 700 68 758 165 815 400 842 560 848 620 835 900 775 1010 752 1160 728 1306 754M68 765 160 822 390 850 520 850 640 825M165 815 50 928M310 820 320 770 340 740 398 820M415 678 428 722M297 825V775h9v50"/>
      <path d="M967 60 900 130 830 203 775 255 760 300 755 340M845 190 865 235 885 292 920 365 930 405M885 292 1040 245M850 75 890 130M925 345 960 310 1000 295M932 370 976 340M1105 55 1150 110 1225 103M1068 555 1120 445 1150 425 1306 404M1150 105 1180 75 1160 65"/>
      <path d="M1162 720 1200 820 1235 955 1265 1050 1300 1130M1155 725 1190 820 1228 955 1258 1050M1175 730 1205 840M1150 680 1165 725M760 1125 1000 1060 1030 1057M750 965 950 908M830 1040V900M1140 1010 1240 990M1145 1068 1300 1048M990 645 1010 580M1025 735 1010 690 1020 650M540 1083 690 1075M980 820 1018 878M890 855 945 880M950 980 1055 967M860 770 1010 690M905 745 1060 650"/>
    </g>
    <!-- creeks and tracks -->
    <g filter="url(#wiggle)" stroke="#f1f2f2" stroke-width="6">
      <path d="M49 118H95L125 120 120 100 95 115M258 430 200 445 215 460 258 430 300 490 370 512 430 510 470 535 560 540 640 545M250 430 310 480M370 512 280 520 255 570 250 610M585 265 590 295 650 322M690 150 670 210 645 215 670 250 690 270 650 300 645 345 620 370 600 395M500 375 540 350 595 355M500 375 545 395 550 430 540 450 560 480 600 490M485 385 490 405 545 430M600 395 640 420 620 470 650 500 640 540M565 435 600 400M595 440 605 520 570 540M620 430 600 420"/>
      <path d="M745 145 690 150 665 220M775 55 745 130 765 130 790 60M830 55 790 100 770 140 725 165 735 190 830 195M850 60 855 85 795 105 780 150 825 200M705 175 760 180 730 130M890 60 890 130 925 160 965 160 975 205 1040 225M965 160 1000 140 1025 110 1070 110M1000 145 1020 155 1060 155M985 175 1010 180 1040 225 1040 245M765 210 800 240 850 250 830 320M650 220 690 280 715 270 705 230 765 210M850 320 860 345 845 400 880 410M655 300 690 270 720 310M930 400 980 410 1000 370 1010 340 1030 320 1035 285 1090 260M970 410 1000 400 1015 420 1040 410 1075 405M1030 320 1070 315M1240 55 1255 110 1250 140 1240 200M1250 110 1306 95M1040 550 1020 520 1005 490 1010 455 1050 465M1000 460 1030 500 1045 530M1068 555 1100 535 1140 540 1180 570 1200 600M1175 450 1140 480 1130 540 1165 580 1180 630 1200 670M1068 555 1030 585"/>
      <path d="M560 570 540 620 520 680 490 710 490 745 530 770 530 800 460 810 450 840 410 840 380 930 340 920 290 940 280 965 180 960 130 970 70 930M455 810V930M410 840 395 900 370 930M130 970 110 1050 115 1080M130 970 140 1010 210 1040 228 1057 165 1090 165 1135M195 1000 250 985 310 980 340 945 440 945 470 980 520 970M235 970 250 995M165 1105 300 1100 350 1080 430 1085M375 1030 410 1055 470 1030 500 970 525 940M560 985 620 990 640 1010 690 995M450 728 500 725 600 720M540 665 590 670 615 690 620 735M570 600 600 615 640 610M530 760 530 830M560 575 580 600 570 640M50 985 90 960M500 780 520 830 560 840M550 640 500 690"/>
      <path d="M860 580 855 640 875 690 880 740 890 770 930 780 970 810 1005 850 1030 880 975 920 965 950 925 980 930 1050 945 1130M890 970 960 985M925 980 890 965M1110 862 1070 920 1100 960 1110 1000 1140 1050 1145 1080 1160 1130M1070 920 1030 890M1080 910 1120 895M1100 945 1165 935M1120 1000 1170 990M850 870 835 960 800 1020 780 1090 760 1130M890 850 830 940M835 960 885 935 880 970 835 980M880 700 970 660 1010 650M905 720 960 715M900 700 870 650M960 680 990 670 995 710 960 730M1200 780 1240 800 1300 785 1306 860 1260 900 1220 940 1200 955M1200 830 1215 870M1200 780 1180 800M1130 570 1180 580 1200 640 1210 680 1280 690 1306 720M1180 610 1240 610 1280 640 1300 670M1240 1060 1245 1110 1306 1110M1260 1055 1290 1120M1060 760 1030 810M1250 570 1240 600 1180 615M1280 620V690M990 1020 985 1080 1000 1130M1000 1110 1070 1090M1300 790 1250 1000 1265 1050"/>
    </g>
    <!-- built-up area -->
    <g filter="url(#rough)" stroke="none"><g clip-path="url(#town)"><path d="M0 0H1365V1179H0z" fill="#f5f5f5"/><path id="specks" fill="#212830"/><path id="greys" fill="#989ca1"/><path d="M917 472 938 452 955 462 935 492zM800 338h22v22h-22zM738 720h14v20h-14zM700 805h16v14h-16zM760 620h14v14h-14zM822 595h10v26h-10zM1088 660h22v18h-22zM1118 700h16v20h-16zM565 790 600 775 625 790 600 800zM700 435h10v18h-10zM610 935h8v8h-8zM1150 818h20v10h-20zM230 305h12v10h-12zM265 295h8v10h-8z" fill="#212830"/></g></g>
    <path d="m938 435 48 24M930 445l48 24M945 425l44 22M925 455l48 24" stroke="#555"/>
    <!-- green boundaries -->
    <g stroke="#16d34a"><path d="M650 340h60M653 482h22M685 535h55M765 537h65M622 614l70 15M862 582h12M415 450l15 5M990 612l-15-3M1010 695l45-25M912 665l-5 20" stroke-width="5"/><path d="M905 650l80-40M130 185 310 150M320 420l225 70M240 690 210 815M900 758l160-85M780 780l240-30M1010 755l95 105M575 848l105 12M575 890l105-15M880 835l-55 80M315 170v250M1160 735l25 95M985 490l-10 60" stroke-width="2.500" stroke="#5cb878"/></g>
    <path d="M735 380h8M800 398h6M680 540h8M745 550h6M360 480h5" stroke="#e66" stroke-width="4"/>
    <!-- solid labels -->
    <g fill="#f8f8f8" stroke="none"><path d="M705 315h20v22h-20zM1172 129h104v9h-104zM672 1050h90v11h-90zM685 1063h70v8h-70zM1150 1092h110v8h-110zM1165 1102h80v5h-80zM1175 1110h60v6h-60zM1172 1042h76v4h-76zM560 549h33v3h-33zM568 462h20v4h-20z"/><circle cx="485" cy="355" r="5"/><circle cx="488" cy="387" r="5"/><circle cx="555" cy="380" r="6"/><circle cx="606" cy="393" r="9"/><circle cx="1013" cy="323" r="8"/><path d="M283 370h7v3h-7zM250 565h10v25h-10z"/><circle cx="252" cy="609" r="7"/><circle cx="450" cy="728" r="7"/><circle cx="1195" cy="920" r="5"/><circle cx="966" cy="927" r="6"/><circle cx="1146" cy="1026" r="5"/><circle cx="1210" cy="935" r="4"/></g>
    <!-- title -->
    <g fill="#212830"><path d="M133 73H355V127H133z"/><path d="M139 82H348V121H139z"/></g>
    <text x="149" y="112" font-family="Liberation Sans" font-size="27" fill="#f0f0f0" stroke="none" letter-spacing="-.5" textLength="180" lengthAdjust="spacingAndGlyphs">JUSSARA - GO</text>
    <!-- inset maps -->
    <path d="M70 1036H158V1120H70z" stroke="#d0d0d0" stroke-width="5"/><path d="M80 1030h65" stroke-width="6" stroke-dasharray="6 3"/>
    <g filter="url(#wiggle)"><path d="M105 1042 150 1045 152 1080 135 1105 100 1112 80 1105 85 1080 100 1065z" fill="#ececec" stroke="none"/></g><circle cx="100" cy="1079" r="5" fill="#1c3fd0" stroke="none"/>
    <path d="M254 1036H350V1122H254z" stroke="#6d7074"/><g filter="url(#wiggle)"><path d="M262 1050l20 10-12 25 10 30M300 1040l20 20 25-5M340 1060l-20 30 25 20M260 1100l30 12M305 1070l35 25M270 1045l-8 40M310 1090l-10 25" stroke="#77756f"/><path d="M283 1042c-18 20-18 40-4 50 10 10 18 30 35 26l-14-30c0-20 2-30-5-46zM315 1112l25-10 8 10-20 12z" fill="#cdf5a5" stroke="none"/></g><path d="M258 1042h22M300 1055h15M258 1112h32M320 1080h18" stroke="#eee"/><path d="M329 1104h9v9h-9z" fill="#f0f" stroke="none"/>
    <path d="M431 1036H530V1120H431z" stroke="#dcdcdc" stroke-width="5"/><path d="M435 1034h60" stroke-width="8"/><path d="M435 1060h95M435 1090h95M455 1036v84M490 1036v84M515 1036v84" stroke="#ddd"/><g filter="url(#wiggle)"><path d="M445 1050h14l14 22 15-18 12-2 2 17 20 28-30-3-8 20-15-6 4-26-22 6-10-12z" fill="#ff3cf2" stroke="none"/></g><path d="M440 1078l85 8M470 1050l25 50" stroke="#fbd" stroke-width="2"/>
    <path d="M622 1075H804V1112H622z" fill="#212830"/><path d="M626 1084h170M626 1097h174M640 1106h150" stroke-width="6"/>
    <path d="M884 1039H1044V1116H884z" stroke="#bbb"/><path d="M940 1047h40M895 1066h140M915 1076h90M895 1096h130" stroke-width="6" stroke-dasharray="12 2 8 3"/><path d="M910 1084h110" stroke-dasharray="6 3"/><path d="M1165 1047H1250V1090H1165z" stroke="#bbb"/><path d="M1144 51V129H1306" stroke="#bbb"/>
    <path d="M165 1105 300 1100 350 1080 450 1088 530 1092" stroke-width="4"/>
  </svg>

  <!-- crosshair -->
  <svg class="absolute left-[1036px] top-[391px]" width="71" height="70" viewBox="0 0 71 70"><path d="M1 34.500H32M39 34.500H70M35.500 0V31M35.500 38V69M32.500 31.500h6v6h-6z" fill="none" stroke="#eee"/></svg>
  <!-- window buttons and view cube -->
  <svg class="absolute left-[1250px] top-[2px]" width="116" height="160" viewBox="0 0 348 480">
    <path d="M165 42h30v9h-30z" fill="#eee"/><path d="M228 34h16v16h-16zM235 34v-8h17v17h-6" fill="none" stroke="#eee" stroke-width="5"/><path d="m287 28 23 23M310 28l-23 23" stroke="#eee" stroke-width="6"/>
    <circle cx="180" cy="231" r="108" fill="none" stroke="#434a52" stroke-width="26"/><path d="M127 178h106v106H127z" fill="#b5b7b9"/><path d="M147 198h66v66h-66z" fill="#a3abb5"/>
    <g font-family="Liberation Sans" font-weight="700" font-size="39" fill="#bcbdbe" stroke="#212830" stroke-width="6" paint-order="stroke" text-anchor="middle" letter-spacing="0"><text x="180" y="133">N</text><text x="180" y="359">S</text><text x="67" y="247">W</text><text x="292" y="247">E</text></g><text x="180" y="242" font-family="Liberation Sans" font-weight="700" font-size="30" fill="#505863" text-anchor="middle" textLength="43" lengthAdjust="spacingAndGlyphs">TOP</text>
    <rect x="108" y="410" width="140" height="51" rx="9" fill="#9599a5" stroke="#7c808b" stroke-width="3"/><text x="119" y="445" font-family="Liberation Sans" font-size="32" fill="#666a76" stroke="#666a76" letter-spacing="0" textLength="72">WCS</text><path d="M210 429h24l-12 11z" fill="none" stroke="#c5c7ce" stroke-width="3"/>
  </svg>
  <!-- navigation bar -->
  <svg class="absolute left-[1328px] top-[180px]" width="36" height="216" viewBox="234 534 108 648" fill="none" stroke="#434950" stroke-width="4">
    <rect x="239" y="540" width="98" height="636" rx="8" fill="#5e6265" stroke="#70747a" stroke-width="3"/><circle cx="318" cy="555" r="12" fill="#45494d" stroke="none"/><path d="m313 550 10 10M323 550l-10 10" stroke="#6a6e72" stroke-width="3"/><path d="M289 598h31v31a32 32 0 1 1-31-31z" fill="#585f69"/><circle cx="289" cy="629" r="17"/><path d="m276 641-10 10M302 641l10 10"/><path d="M282 688h16l-8 8zM282 898h16l-8 8zM282 1012h16l-8 8z" fill="#33383e" stroke="none"/><path d="M248 710h80M248 1033h80" stroke="#6c7074" stroke-width="3"/>
    <path d="M254 758c8-6 16 2 20 10l-5-36c4-6 9-4 11 1l5 25 1-32c5-4 9-3 11 2v30l8-27c5-4 9-1 9 4l-3 32 7-8c5-1 5 3 3 6l-10 20-14 10h-24z" fill="#5a616a"/>
    <path d="m256 812 42 44M298 812l-42 44M253 820v-11h11M288 809h11v11M253 848v11h11"/><circle cx="301" cy="852" r="14" fill="#636d7b"/><path d="m311 863 12 12" stroke-width="7"/><ellipse cx="287" cy="960" rx="33" ry="11"/><path d="M281 986v-48h-7l13-14 12 14h-7v48z" fill="#5e6265"/><path d="M276 960v20l-14-9z" fill="#434950"/><path d="M253 1049h18v18h-18zM278 1049h18v18h-18zM302 1049h18v18h-18zM253 1076h49v39h-49z" fill="#585f69"/><path d="m267 1082 20 13-20 13z" fill="#434950" stroke="none"/><circle cx="318" cy="1158" r="12" fill="#45494d" stroke="none"/><path d="M312 1156h12M314 1161h8" stroke="#6a6e72" stroke-width="3"/>
  </svg>

  <!-- properties palette -->
  <aside class="absolute z-10 left-[9px] top-[3px] w-[187px] h-[498px] bg-[#2e3440] rounded-r-[4px] flex">
    <div class="w-[21px] flex flex-col items-center justify-between pt-[5px] pb-[1px]">
      <svg width="12" height="48" viewBox="42 33 36 144" stroke="#c4c7cc" fill="none"><path d="m50 39 20 18M70 39 50 57" stroke-width="6"/><path d="M50 90v30M59 90v30" stroke-width="4"/><path d="M72 96v18l-10-9z" fill="#c4c7cc" stroke="none"/><circle cx="60" cy="162" r="9" stroke-width="4"/><path d="M60 147v6M60 171v6M45 162h6M69 162h6M49 151l5 5M71 151l-5 5M49 173l5-5M71 173l-5-5" stroke-width="5"/></svg>
      <div class="flex flex-col items-center gap-[9px]"><span class="[writing-mode:vertical-rl] rotate-180 text-[#b5b9c0] tracking-[-0.5px]">PROPERTIES</span><svg width="13" height="17" viewBox="0 0 13 17"><path d="M0 0h13v17H0z" fill="#ddd"/><path d="M2 2h8v6H2z" fill="#7cc4ff" stroke="#333"/><path d="M2 11h9M2 14h9M5 9v4M8 12v4" stroke="#444"/></svg></div>
    </div>
    <div class="w-[165px] h-[496px] mt-[2px] bg-[#3b4453] border border-[#252b35] rounded-[4px] pt-[12px] pl-[19px] flex flex-col gap-[3px]">
      <div class="flex h-[24px] mb-0">
        <div class="w-[59px] h-[24px] bg-[#4b566a] border border-[#272e39] flex items-center pl-[3px]"><span class="w-[43px]">No s...</span><svg class="w-[8px] h-[4px]"><use href="#caret"/></svg></div>
        <svg width="73" height="24" viewBox="327 66 219 72"><path d="M351 81h22v25h-22zM366 98h27v25h-27z" fill="#7cc4ff" stroke="#3b4453" stroke-width="2"/><path d="M387 75v22M376 86h22" stroke="#4ed184" stroke-width="5"/><path d="M424 76h42v32h-42z" fill="none" stroke="#62d08a" stroke-width="3" stroke-dasharray="6 4"/><path d="M429 81h28v22h-28z" fill="#7fd69d"/><path d="M449 90v31l7-6 5 9 5-3-4-9h8z" fill="#fff"/><path d="m516 75-9 14h8l-4 12 16-16h-7z" fill="#ffd174"/><path d="M495 88v31l7-6 5 9 5-3-4-9h8z" fill="#fff"/><path d="M515 94h28v29h-28z" fill="#fff"/><path d="M520 102h4M528 102h10M520 109h4M528 109h10M520 116h4M528 116h10" stroke="#2f88d0" stroke-width="3"/></svg>
      </div>
      <div class="w-[131px] h-[20px] bg-[#2c323d] flex items-center justify-between pl-[7px] pr-[9px] font-semibold text-[#b2b6bd]"><span>General</span><svg width="5" height="8" viewBox="0 0 5 8"><path d="M5 0v8L0 4z" fill="#ddd"/></svg></div>
      <div class="flex flex-col w-[131px]"><div class="h-[20px] bg-[#2c323d] flex items-center justify-between pl-[7px] pr-[8px] font-bold text-white tracking-[-0.5px]"><span>3D Visualization</span><svg class="w-[8px] h-[4px]"><use href="#caret"/></svg></div>
        <div class="ml-[17px] grid grid-cols-[46px_67px] auto-rows-[19px] border-l border-[#2c323d] text-[#d0d3d8] [&>*]:border-b [&>*]:border-r [&>*]:border-[#2c323d] [&>*]:pt-[4px] [&>*:nth-child(odd)]:pl-[6px] [&>*:nth-child(even)]:pl-[4px]"><span>Mate...</span><span class="text-white">ByLayer</span></div></div>
      <div class="flex flex-col w-[131px]"><div class="h-[20px] bg-[#2c323d] flex items-center justify-between pl-[7px] pr-[8px] font-bold text-white tracking-[-0.5px]"><span>Plot style</span><svg class="w-[8px] h-[4px]"><use href="#caret"/></svg></div>
        <div class="ml-[17px] grid grid-cols-[46px_67px] auto-rows-[19px] border-l border-[#2c323d] text-[#d0d3d8] [&>*]:border-b [&>*]:border-r [&>*]:border-[#2c323d] [&>*]:pt-[4px] [&>*:nth-child(odd)]:pl-[6px] [&>*:nth-child(even)]:pl-[3px]"><span>Plot...</span><span class="text-[#8b9099]">ByColor</span><span>Plot...</span><span class="text-white">None</span><span>Plot t...</span><span class="text-[#8b9099]">Model</span><span>Plot t...</span><span class="text-[#8b9099]">Not avail...</span></div></div>
      <div class="flex flex-col w-[131px]"><div class="h-[20px] bg-[#2c323d] flex items-center justify-between pl-[7px] pr-[8px] font-bold text-white tracking-[-0.5px]"><span>View</span><svg class="w-[8px] h-[4px]"><use href="#caret"/></svg></div>
        <div class="ml-[17px] grid grid-cols-[46px_67px] auto-rows-[19px] border-l border-[#2c323d] text-[#d0d3d8] [&>*]:border-b [&>*]:border-r [&>*]:border-[#2c323d] [&>*]:pt-[4px] [&>*:nth-child(odd)]:pl-[6px] [&>*:nth-child(even)]:pl-[3px] [&>*:nth-child(even)]:text-[#8b9099] [&>*:nth-child(even)]:tracking-[-0.6px]"><span>Cent...</span><span>513938.59...</span><span>Cent...</span><span>8246117.2...</span><span>Cent...</span><span>0.0000</span><span>Height</span><span>6928.2619</span><span>Width</span><span>17480.7348</span></div></div>
      <div class="flex flex-col w-[131px]"><div class="h-[20px] bg-[#2c323d] flex items-center justify-between pl-[7px] pr-[8px] font-bold text-white tracking-[-0.3px]"><span>Misc</span><svg class="w-[8px] h-[4px]"><use href="#caret"/></svg></div>
        <div class="ml-[17px] grid grid-cols-[46px_67px] auto-rows-[19px] border-l border-[#2c323d] text-[#d0d3d8] [&>*]:border-b [&>*]:border-r [&>*]:border-[#2c323d] [&>*]:pt-[4px] [&>*:nth-child(odd)]:pl-[6px] [&>*:nth-child(even)]:pl-[4px] [&>*:nth-child(even)]:text-white"><span>Anno...</span><span>1:1</span><span>UCS i...</span><span>Yes</span><span>UCS i...</span><span>Yes</span><span>UCS...</span><span>Yes</span><span>UCS...</span><span></span><span>Visua...</span><span>2D Wiref...</span></div></div>
    </div>
  </aside>
</main>
<div class="h-[4px] bg-[#3b4453]"></div>

<!-- layout tabs -->
<div class="flex items-start h-[28px] text-white">
  <div class="ml-[8px] w-[62px] h-[24px] bg-[#3b4453] [clip-path:polygon(0_0,100%_0,60px_100%,0_100%)] pl-[17px] pt-[6px] font-bold">Model</div>
  <span class="w-[67px] pl-[15px] pt-[6px]">Layout1</span><span class="w-[62px] pl-[13px] pt-[6px]">Layout2</span>
  <svg width="60" height="24" viewBox="199 664 60 24"><path d="m201 683 6-15M241 683l6-15" stroke="#4b5462" stroke-width="1.500"/><path d="M218 676h12M224 670v12" stroke="#ddd" stroke-width="2"/></svg>
</div>
<div class="h-[2px]"></div>

<!-- status bar -->
<div class="flex items-stretch h-[24px] bg-[#222933] pl-[2px] [&>*]:shrink-0">
  <div class="w-[767px] bg-[#3b4453] mr-[4px]"></div>
  <div class="w-[47px] bg-[#3b4453] mr-[3px] flex items-center justify-center tracking-[-0.2px]">MODEL</div>
  <svg class="bg-[#3b4453] mr-[3px]" width="64" height="24" viewBox="823 694 64 24" stroke="#ddd" fill="#ddd"><path d="M827 701.500h16M827 706.500h16M827 711.500h16M830.500 698v16M835.500 698v16M840.500 698v16" stroke-width="1"/><path d="M853 701h12M853 706.500h12M853 712h12" stroke-width="2" stroke-dasharray="2 3"/><path d="M875 704h8l-4 4.500z" stroke="none"/></svg>
  <svg class="bg-[#3b4453] mr-px" width="105" height="24" viewBox="890 694 105 24" stroke="#ddd" fill="none"><path d="M894.500 698v15.500H910M894.500 707.500h5v6"/><circle cx="925" cy="706" r="6.500"/><path d="M925 706.500h9M925 706l8-8"/><path d="m959 698 13 14" stroke="#e66"/><path d="M965.500 699v15" stroke="#5fd07a"/><path d="M942 704h8l-4 4.500zM982 704h8l-4 4.500z" stroke="none" fill="#ddd"/></svg>
  <svg class="bg-[#3b4453] mr-[3px]" width="62" height="24" viewBox="996 694 62 24" stroke="#ddd" fill="none"><path d="m1012 699-12 13.500h15"/><path d="M1020 694h22v24h-22z" fill="#6292c6" stroke="none"/><path d="M1027.500 700.500h11v12h-14v-8M1023.500 698.500h4v4h-4z" stroke="#fff"/><path d="M1047 704h8l-4 4.500z" stroke="none" fill="#ddd"/></svg>
  <svg class="bg-[#6292c6] mr-[3px]" width="23" height="24" viewBox="0 0 23 24"><path d="M11.500 4c-7 0-6.500 7 0 15.500 6.500-8.500 7-15.500 0-15.500z" fill="#fff"/><circle cx="11.500" cy="9" r="2" fill="#6292c6"/></svg>
  <svg class="bg-[#3b4453] mr-[3px]" width="106" height="24" viewBox="1087 694 106 24"><path d="M1087 694h23v24h-23z" fill="#6292c6"/><path d="M1097 698l3 9 4 6-4-2-2 4h-2l-2-4-4 2 4-6z" fill="#fff"/><circle cx="1104" cy="702" r="2.500" fill="none" stroke="#fff"/><use href="#scale" x="1114" y="697" width="16" height="18"/><path d="m1128 698-3 4h4l-3 4" fill="none" stroke="#ddd"/><use href="#scale" x="1139" y="697" width="16" height="18"/><text x="1164" y="710" font-size="11.500" font-weight="600" fill="#eee" letter-spacing="-.7">1:1</text><path d="M1181 704h8l-4 4.500z" fill="#ddd"/></svg>
  <svg class="bg-[#3b4453] mr-[3px]" width="39" height="24" viewBox="1196 694 39 24"><circle cx="1207.500" cy="706" r="4" fill="none" stroke="#ddd" stroke-width="3.500"/><circle cx="1207.500" cy="706" r="6.500" fill="none" stroke="#ddd" stroke-width="2.500" stroke-dasharray="2.600 2.500"/><path d="M1224 704h8l-4 4.500z" fill="#ddd"/></svg>
  <svg class="bg-[#3b4453] mr-[3px]" width="23" height="24" viewBox="0 0 23 24"><path d="M3 12h17M11.500 4v16" stroke="#ddd" stroke-width="1.500"/></svg>
  <svg class="bg-[#3b4453] mr-[3px]" width="24" height="24" viewBox="0 0 24 24" fill="none" stroke="#ddd"><path d="M4.500 4.500h6v6h-6zM10 14.500l3.500 5h-7z"/><circle cx="17" cy="10" r="3.500"/></svg>
  <svg class="bg-[#3b4453] mr-[3px]" width="22" height="24" viewBox="0 0 22 24"><circle cx="11" cy="10" r="6.500" fill="#2769b5"/><path d="M5 5v7h12" stroke="#aad6ff" stroke-dasharray="2 1" fill="none"/><path d="M3 13h7v6H3z" fill="#f5b43c"/><path d="m10 15 4 4 6-7" fill="none" stroke="#35ad55" stroke-width="3"/></svg>
  <svg class="bg-[#3b4453]" width="48" height="24" viewBox="0 0 48 24" fill="none" stroke="#ddd"><path d="M4.500 6.500h15v11h-15zM7 15l4-3M13 11l4-3M7.500 12.500v3h3M14 8.500h3v3"/><path d="M28 6.500h16M28 12.500h16M28 18.500h16" stroke-width="1.500"/></svg>
</div>

<!-- taskbar -->
<footer class="flex items-center flex-1 bg-[#1f2123] border-t-[2px] border-[#33363b] tracking-[-0.2px] [&>*]:shrink-0">
  <svg width="57" height="46" viewBox="0 722 57 46"><path d="M21 733h11v11H21zM33 733h11v11H33zM21 745h11v11H21zM33 745h11v11H33z" fill="#4cc2ff"/></svg>
  <div class="w-[220px] h-[32px] rounded-full bg-[#33363a] border border-[#44474b] flex items-center pl-[12px]">
    <svg width="16" height="16" viewBox="0 0 16 16" fill="none" stroke="#eee" stroke-width="1.500"><circle cx="6.500" cy="6.500" r="5"/><path d="m10 10 5 5"/></svg><span class="text-[14px] text-[#cfd0d2] pl-[8px] w-[163px] tracking-[-0.5px]">Pesquisar</span>
    <svg width="24" height="24" viewBox="0 0 24 24"><circle cx="12" cy="12" r="10" fill="#1679d3"/><path d="m8 5 3 1.500v10l5-3-3-1.500-1-3 7 3v3.500l-8 4.500-3-2z" fill="#fff"/></svg>
  </div>
  <svg width="530" height="46" viewBox="277 722 530 46">
    <circle cx="301" cy="744" r="10" fill="#f9a13b"/><path d="M297 735c0 9 6 13 14 12-4 8-18 10-20-3z" fill="#e07010"/><text x="301" y="739" font-size="10.500" fill="#fff" letter-spacing="-.5">24°</text>
    <path d="m351 732 6 3v18l-6 3-11-9-4 3-3-2v-8l3-2 4 3zM351 738l-7 6 7 6z" fill="#2a9df4" fill-rule="evenodd"/><path d="m336 738 16 14v4l-19-16z" fill="#0f6fc0"/>
    <path d="M380 732h18v24h-18z" fill="#7b838b"/><path d="M382 734h14v5h-14z" fill="#d8eefb"/><path d="M383 743h12M383 748h12M383 753h12" stroke="#f0f0f0" stroke-width="3" stroke-dasharray="3 1.500"/><path d="M392 746h4v9h-4z" fill="#3ba3e8"/>
    <path d="M429 733h14v11h-14z" fill="#35a4e8"/><path d="M427 743h18v12h-18z" fill="#1f7fd0"/><path d="m427 743 9 7 9-7" stroke="#6fd0ff" fill="none"/><path d="M421 738h12v12h-12z" fill="#0f62b5"/><circle cx="427" cy="744" r="3" fill="none" stroke="#fff" stroke-width="2"/>
    <g id="chrome"><circle cx="477" cy="744" r="12" fill="#f2c130"/><path d="M466.600 738a12 12 0 0 0 9 18l3.500-8z" fill="#34a350"/><path d="M466.600 738a12 12 0 0 1 20.800 0H477v6z" fill="#e34133"/><circle cx="477" cy="744" r="5.500" fill="#fff"/><circle cx="477" cy="744" r="4.300" fill="#3c7de8"/></g>
    <path d="M509 734h9l3 3h12v18h-24z" fill="#e8a317"/><path d="M509 740h24v15h-24z" fill="#ffd257"/><path d="M514 749h14v6h-14z" fill="#3a8fd8"/>
    <rect x="553" y="732" width="24" height="24" rx="1" fill="#f2f0fb"/><path d="M557 735l7 2v7h-7zM557 745h7v8h-7z" fill="#7a4fe0"/><path d="M566 738l6-3 1 5-2 4 2 5-3 4h-4z" fill="#4b6de8"/>
    <use href="#chrome" x="132"/><circle cx="618" cy="735" r="7" fill="#ddd"/><path d="m612 738 8-7 4 5-8 4z" fill="#222"/>
    <use href="#chrome" x="175"/><circle cx="661" cy="735" r="7" fill="#4b7a38"/><text x="658" y="739" font-size="9" fill="#fff">D</text>
    <rect x="677" y="724" width="38" height="40" rx="4" fill="#36393d"/><path d="M686 732h21v25h-21z" fill="#e3154f"/><path d="M686 747h21v10h-21z" fill="#a10e3a"/><text x="692" y="745" font-size="14" font-weight="700" fill="#fff">A</text><text x="691" y="755" font-size="6" font-weight="700" fill="#fff" letter-spacing="0">CAD</text>
    <path d="M735 733h18v22h-18z" fill="#21a366"/><path d="M744 733h9v11h-9z" fill="#33c481"/><path d="M735 744h18v11h-18z" fill="#107c41"/><path d="M729 738h13v13h-13z" fill="#0e6b38"/><path d="m732 741 7 7M739 741l-7 7" stroke="#fff" stroke-width="1.800"/>
    <circle cx="785" cy="744" r="11" fill="#1b5fae"/><path d="M777 738c4-5 10-5 12-3l-3 6 6 5-5 7-8-2z" fill="#56b64a"/><path d="m788 748 7 8" stroke="#e0933c" stroke-width="3"/><circle cx="784" cy="742" r="6.500" fill="#d5ecff" fill-opacity=".75" stroke="#ddd" stroke-width="1.500"/>
    <path d="M518 762h6M606 762h6M650 762h6M738 762h6M782 762h6" stroke="#9a9da0" stroke-width="3" stroke-linecap="round"/><path d="M690 762h14" stroke="#6cc5f5" stroke-width="3" stroke-linecap="round"/>
  </svg>
  <svg class="ml-[277px]" width="70" height="46" viewBox="1084 722 70 46"><path d="m1095 747 5-5 5 5" fill="none" stroke="#fff" stroke-width="1.500"/><path d="m1132 736 8 3v6c0 4-4 6-8 8-4-2-8-4-8-8v-6z" fill="#2c8ce0"/><path d="M1132 736v17c-4-2-8-4-8-8v-6z" fill="#4fb3f5"/><path d="m1136 741 6 11h-11z" fill="#ffc83d"/><path d="M1136 745v4M1136 750v1" stroke="#222"/></svg>
  <div class="w-[42px] flex flex-col gap-[4px] text-center -ml-[5px] text-white"><span>POR</span><span>PTB2</span></div>
  <svg width="49" height="46" viewBox="1191 722 49 46" fill="none" stroke="#fff" stroke-width="1.200"><path d="M1209 737h-9v11h12v-4M1203 752h7M1206 748v4M1211 736h5v5h-2v11h-4M1212 736v4"/><path d="M1227 742h4l3-4v12l-3-3h-4z"/><circle cx="1235" cy="748" r="4.500" fill="#fff"/><path d="m1233 746 4 4M1237 746l-4 4" stroke="#222"/></svg>
  <div class="w-[79px] flex flex-col gap-[4px] items-end text-white text-[11.500px] tracking-[-0.1px]"><span>11:10</span><span>12/09/2023</span></div>
  <div class="ml-[11px] w-[16px] h-[16px] rounded-full bg-[#4cc2ff] text-[#14242e] text-[10px] flex items-center justify-center">2</div>
</footer>
</div>
<script>
// Street and parcel texture of the built-up area.
let seed = 7;
const rnd = () => (seed = (seed * 16807) % 2147483647) / 2147483647;
let dark = '', grey = '';
for (let y = 265; y < 1055; y += 3) {
  for (let x = 75; x < 1190; x += 3) {
    const r = rnd();
    if (r < 0.06) dark += `M${x} ${y}h3v${rnd() < 0.3 ? 6 : 3}h-3z`;
    else if (r < 0.26) grey += `M${x} ${y}h${rnd() < 0.3 ? 6 : 3}v3h-3z`;
  }
}
for (let y = 270; y < 1055; y += 18) grey += `M60 ${y}H1190v2H60z`;
for (let x = 70; x < 1190; x += 27) grey += `M${x} 260v800h2V260z`;
document.getElementById('specks').setAttribute('d', dark);
document.getElementById('greys').setAttribute('d', grey);
</script>
</body>
</html>
